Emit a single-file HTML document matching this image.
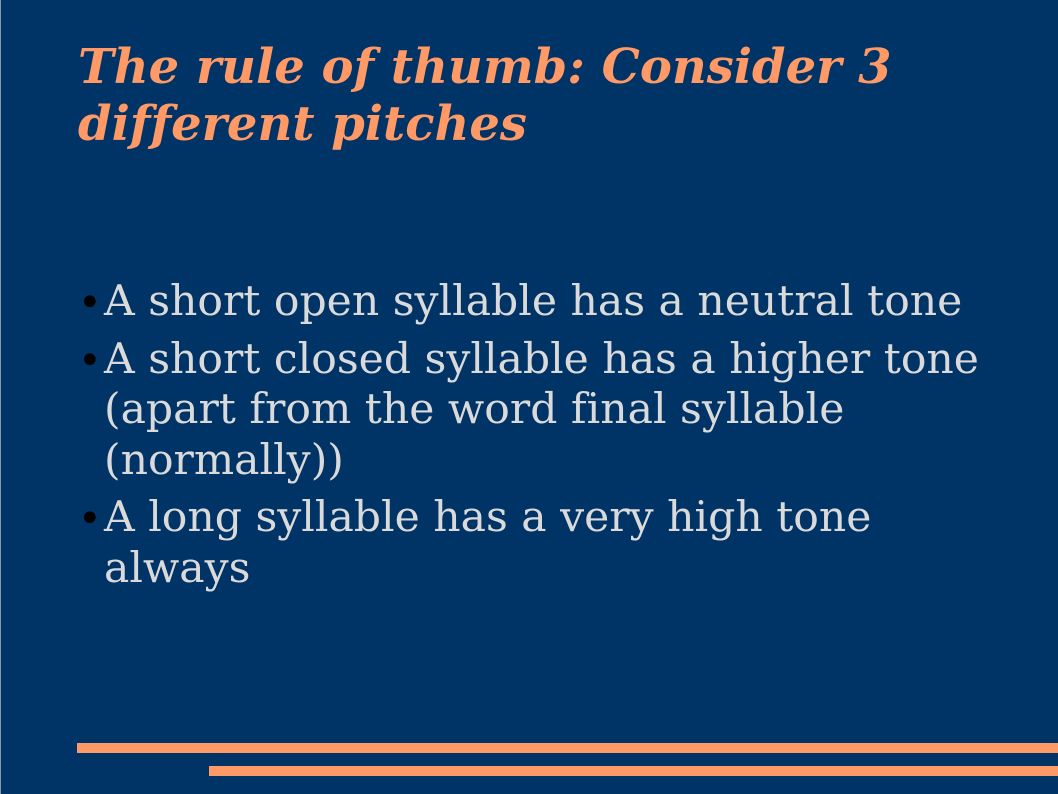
<!DOCTYPE html>
<html><head><style>
body{margin:0;width:1058px;height:794px;background:#003366;overflow:hidden;position:relative;font-family:"DejaVu Serif","Liberation Serif",serif;}
.lb{position:absolute;left:0;top:0;width:1px;height:794px;background:#8899aa;}
h1{position:absolute;left:78px;top:39px;margin:0;font-size:48px;line-height:57px;font-weight:bold;font-style:italic;color:#ff9966;white-space:nowrap;font-variant-ligatures:none;}
ul{position:absolute;left:80px;top:277px;margin:0;padding:0;list-style:none;color:#dadada;font-size:42.5px;line-height:50.5px;font-variant-ligatures:none;white-space:nowrap;}
li{position:relative;padding-left:24px;margin-bottom:7px;}
li:before{content:"•";position:absolute;left:-2px;top:1px;font-size:40px;color:#000;}
.b1{position:absolute;left:77px;top:743px;width:981px;height:10px;background:#ff9966;}
.b2{position:absolute;left:209px;top:766px;width:849px;height:10px;background:#ff9966;}
</style></head><body>
<div class="lb"></div>
<h1>The rule of thumb: Consider 3<br>different pitches</h1>
<ul>
<li>A short open syllable has a neutral tone</li>
<li>A short closed syllable has a higher tone<br>(apart from the word final syllable<br>(normally))</li>
<li>A long syllable has a very high tone<br>always</li>
</ul>
<div class="b1"></div><div class="b2"></div>
</body></html>
